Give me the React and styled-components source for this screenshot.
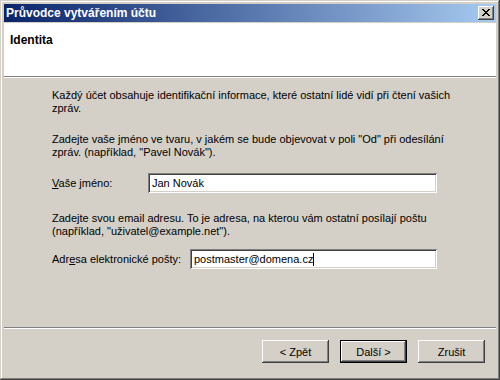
import React from 'react'
import styled, { createGlobalStyle } from 'styled-components'

const GlobalStyle = createGlobalStyle`
  html, body {
    margin: 0;
    padding: 0;
    background: #d4d0c8;
  }
  * { box-sizing: border-box; }
`

const Window = styled.div`
  width: 500px;
  height: 380px;
  display: flex;
  flex-direction: column;
  padding: 4px;
  background: #d4d0c8;
  box-shadow: inset -1px -1px #404040, inset 1px 1px #d4d0c8,
    inset -2px -2px #808080, inset 2px 2px #ffffff;
  font-family: "Liberation Sans", Arial, sans-serif;
  font-size: 11px;
  color: #000;
`

const TitleBar = styled.div`
  height: 18px;
  display: flex;
  align-items: center;
  justify-content: space-between;
  padding: 0 2px 0 2px;
  background: linear-gradient(to right, #0a246a, #a6caf0);
  color: #fff;
  font-weight: bold;
  font-size: 12px;
`

const TitleText = styled.span`
  white-space: nowrap;
`

const CloseButton = styled.div`
  width: 16px;
  height: 14px;
  display: flex;
  align-items: center;
  justify-content: center;
  background: #d4d0c8;
  box-shadow: inset -1px -1px #404040, inset 1px 1px #ffffff,
    inset -2px -2px #808080, inset 2px 2px #d4d0c8;
  padding-bottom: 1px;
`

const Header = styled.div`
  margin-top: 1px;
  height: 54px;
  background: #fff;
  border-bottom: 1px solid #808080;
  box-shadow: 0 1px 0 #ffffff;
  padding: 10px 0 0 6px;
  font-weight: bold;
  font-size: 12px;
  line-height: 14px;
`

const Body = styled.div`
  flex: 1;
  margin-top: 1px;
  padding: 11px 0 0 48px;
  display: flex;
  flex-direction: column;
`

const Para = styled.p`
  margin: ${p => p.$top || 0}px 0 0 0;
  line-height: 13px;
  white-space: nowrap;
`

const Row = styled.div`
  display: flex;
  align-items: center;
  width: 385px;
  margin-top: ${p => p.$top || 0}px;
`

const Label = styled.label`
  width: ${p => p.$width}px;
  flex: none;
  line-height: 13px;
  padding-top: 1px;
`

const Field = styled.div`
  flex: 1;
  height: 20px;
  background: #fff;
  display: flex;
  align-items: center;
  padding: 0 4px;
  box-shadow: inset 1px 1px #808080, inset -1px -1px #ffffff,
    inset 2px 2px #404040, inset -2px -2px #d4d0c8;
  white-space: nowrap;
`

const Caret = styled.span`
  display: inline-block;
  width: 1px;
  height: 13px;
  background: #000;
`

const Footer = styled.div`
  border-top: 1px solid #808080;
  box-shadow: inset 0 1px 0 #ffffff;
  padding: 12px 11px 13px 0;
  display: flex;
  justify-content: flex-end;
  gap: 11px;
`

const Button = styled.div`
  width: 67px;
  height: 23px;
  display: flex;
  align-items: center;
  justify-content: center;
  background: #d4d0c8;
  box-shadow: ${p => p.$default
    ? 'inset 0 0 0 1px #000, inset -2px -2px #404040, inset 2px 2px #ffffff, inset -3px -3px #808080'
    : 'inset -1px -1px #404040, inset 1px 1px #ffffff, inset -2px -2px #808080, inset 2px 2px #d4d0c8'};
  white-space: nowrap;
`

function CloseIcon() {
  return (
    <svg width="8" height="7" viewBox="0 0 8 7" shapeRendering="crispEdges">
      <path
        d="M0 0h2v1h-2zM6 0h2v1h-2zM1 1h2v1h-2zM5 1h2v1h-2zM2 2h4v1h-4zM3 3h2v1h-2zM2 4h4v1h-4zM1 5h2v1h-2zM5 5h2v1h-2zM0 6h2v1h-2zM6 6h2v1h-2z"
        fill="#000"
      />
    </svg>
  )
}

export default function App() {
  return (
    <>
      <GlobalStyle />
      <Window>
        <TitleBar>
          <TitleText>Průvodce vytvářením účtu</TitleText>
          <CloseButton><CloseIcon /></CloseButton>
        </TitleBar>
        <Header>Identita</Header>
        <Body>
          <Para>
            Každý účet obsahuje identifikační informace, které ostatní lidé vidí při čtení vašich<br />
            zpráv.
          </Para>
          <Para $top={18}>
            Zadejte vaše jméno ve tvaru, v jakém se bude objevovat v poli "Od" při odesílání<br />
            zpráv. (například, "Pavel Novák").
          </Para>
          <Row $top={14}>
            <Label $width={96}><u>V</u>aše jméno:</Label>
            <Field>Jan Novák</Field>
          </Row>
          <Para $top={19}>
            Zadejte svou email adresu. To je adresa, na kterou vám ostatní posílají poštu<br />
            (například, "uživatel@example.net").
          </Para>
          <Row $top={11}>
            <Label $width={138}>Adr<u>e</u>sa elektronické pošty:</Label>
            <Field>postmaster@domena.cz<Caret /></Field>
          </Row>
        </Body>
        <Footer>
          <Button>&lt; Zpět</Button>
          <Button $default>Další &gt;</Button>
          <Button>Zrušit</Button>
        </Footer>
      </Window>
    </>
  )
}
